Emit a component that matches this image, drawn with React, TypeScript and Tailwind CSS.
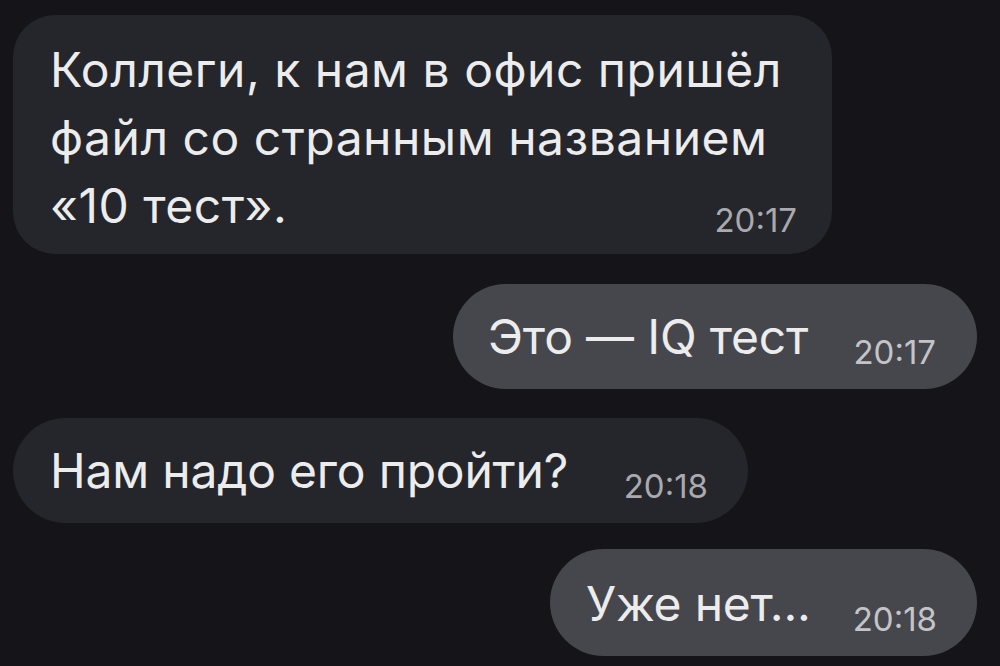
export default function App() {
  const font = { fontFamily: "Inter, 'Noto Sans', sans-serif" };

  return (
    <div
      className="w-[1000px] h-[666px] overflow-hidden bg-[#141419] text-[#ececec] flex flex-col pt-[15px] pl-[13px] pr-[23px]"
      style={font}
    >
      {/* входящее, три строки */}
      <div className="shrink-0 w-[819px] rounded-[42px] bg-[#25262b] pl-[37px] pr-[35px] pt-[21px] pb-[14px]">
        <div className="whitespace-nowrap text-[48px] leading-[68px] tracking-[0.5px]">
          <div>Коллеги, к нам в офис пришёл</div>
          <div>файл со странным названием</div>
          <div className="flex items-end">
            <span>«10 тест».</span>
            <span className="ml-auto text-[33px] leading-[32px] tracking-normal text-[#a9a9ae] mb-[4px]">20:17</span>
          </div>
        </div>
      </div>

      {/* исходящее */}
      <div className="shrink-0 self-end mt-[30px] w-[524px] h-[105px] rounded-full bg-[#46474c] pl-[35px] pr-[41px] pb-[21px] flex items-end">
        <span className="whitespace-nowrap text-[48px] leading-[56px] tracking-[-0.2px] mb-[3px]">Это — IQ тест</span>
        <span className="ml-auto text-[33px] leading-[32px] text-[#c4c4c8]">20:17</span>
      </div>

      {/* входящее */}
      <div className="shrink-0 mt-[29px] w-[735px] h-[105px] rounded-full bg-[#25262b] pl-[37px] pr-[40px] pb-[21px] flex items-end">
        <span className="whitespace-nowrap text-[48px] leading-[56px] tracking-[-0.2px] mb-[3px]">Нам надо его пройти?</span>
        <span className="ml-auto text-[33px] leading-[32px] text-[#a9a9ae]">20:18</span>
      </div>

      {/* исходящее */}
      <div className="shrink-0 self-end mt-[26px] w-[427px] h-[107px] rounded-full bg-[#46474c] pl-[36px] pr-[40px] pb-[21px] flex items-end">
        <span className="whitespace-nowrap text-[48px] leading-[56px] tracking-[-0.2px] mb-[3px]">Уже нет...</span>
        <span className="ml-auto text-[33px] leading-[32px] text-[#c4c4c8]">20:18</span>
      </div>
    </div>
  );
}
